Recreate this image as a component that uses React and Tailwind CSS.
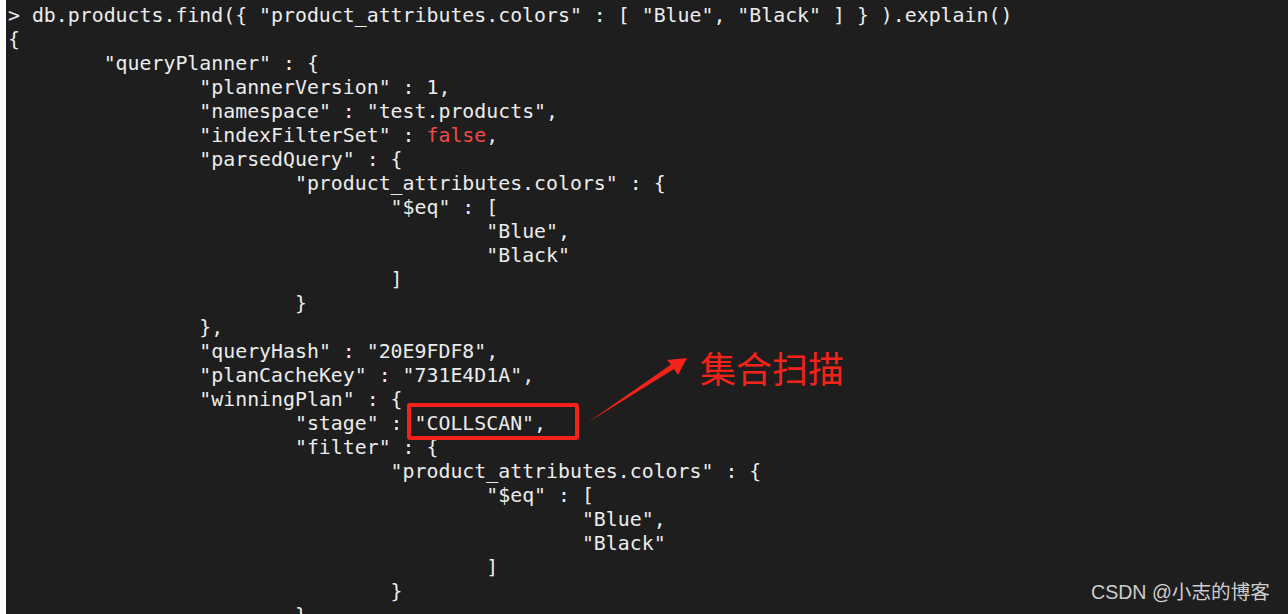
import React from "react";

const lines = [
  { t: '> db.products.find({ "product_attributes.colors" : [ "Blue", "Black" ] } ).explain()' },
  { t: "{" },
  { t: '\t"queryPlanner" : {' },
  { t: '\t\t"plannerVersion" : 1,' },
  { t: '\t\t"namespace" : "test.products",' },
  { t: '\t\t"indexFilterSet" : ', red: "false", after: "," },
  { t: '\t\t"parsedQuery" : {' },
  { t: '\t\t\t"product_attributes.colors" : {' },
  { t: '\t\t\t\t"$eq" : [' },
  { t: '\t\t\t\t\t"Blue",' },
  { t: '\t\t\t\t\t"Black"' },
  { t: "\t\t\t\t]" },
  { t: "\t\t\t}" },
  { t: "\t\t}," },
  { t: '\t\t"queryHash" : "20E9FDF8",' },
  { t: '\t\t"planCacheKey" : "731E4D1A",' },
  { t: '\t\t"winningPlan" : {' },
  { t: '\t\t\t"stage" : "COLLSCAN",' },
  { t: '\t\t\t"filter" : {' },
  { t: '\t\t\t\t"product_attributes.colors" : {' },
  { t: '\t\t\t\t\t"$eq" : [' },
  { t: '\t\t\t\t\t\t"Blue",' },
  { t: '\t\t\t\t\t\t"Black"' },
  { t: "\t\t\t\t\t]" },
  { t: "\t\t\t\t}" },
  { t: "\t\t\t}" },
];

export default function App() {
  return (
    <div className="relative h-[614px] w-[1288px] overflow-hidden border-l-[6px] border-white bg-[#1e1e1e]">
      <pre
        className="m-0 pl-[2px] pt-[4px] text-[19.87px] leading-[24px] text-[#ececec] [tab-size:8]"
        style={{ fontFamily: '"DejaVu Sans Mono", "Liberation Mono", monospace' }}
      >
        {lines.map((l, i) => (
          <div key={i} className="h-[24px] whitespace-pre">
            {l.t}
            {l.red && <span className="text-[#f24848]">{l.red}</span>}
            {l.after}
          </div>
        ))}
      </pre>

      {/* annotation */}
      <div className="absolute left-[401px] top-[403px] h-[37px] w-[172px] rounded-[3px] border-4 border-[#f5221a]" />
      <svg className="absolute left-0 top-0" width="1288" height="614" viewBox="6 0 1288 614">
        <polygon
          points="587,423 671,364.5 667,360 687,358 678,375 674,369"
          fill="#f5221a"
        />
      </svg>
      <div
        className="absolute left-[694px] top-[343px] text-[36px] leading-[48px] text-[#f5221a]"
        style={{ fontFamily: '"Noto Sans CJK SC", sans-serif' }}
      >
        集合扫描
      </div>

      <div
        className="absolute left-[1085px] top-[579px] text-[19.6px] leading-[26px] text-[#cdcdcd]"
        style={{ fontFamily: '"Liberation Sans", "Noto Sans CJK SC", sans-serif' }}
      >
        CSDN @小志的博客
      </div>
    </div>
  );
}
